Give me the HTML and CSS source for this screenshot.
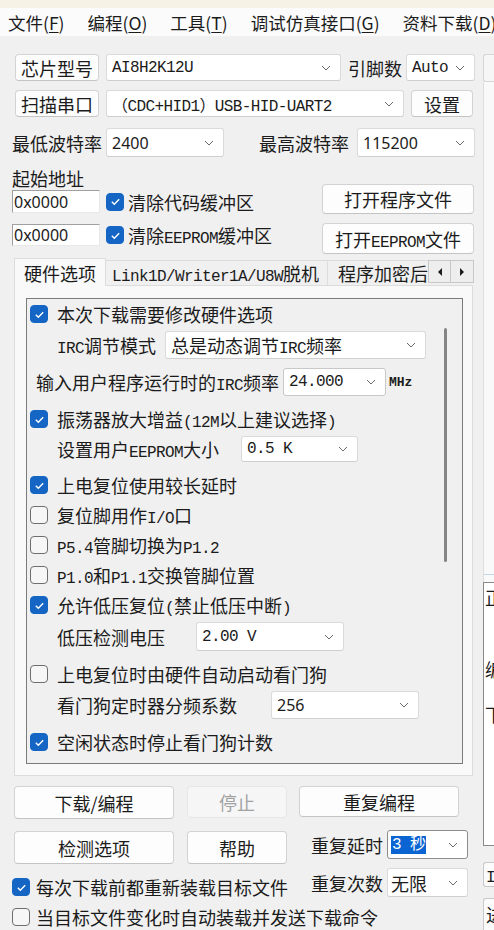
FILE: index.html
```html
<!DOCTYPE html>
<html lang="zh-CN">
<head>
    <meta charset="UTF-8">
    <meta name="viewport" content="width=device-width, initial-scale=1.0">
    <title>ISP 下载</title>
    <link rel="stylesheet" href="styles.css">
</head>
<body>
    <div class="strip"></div>

    <!-- Menu -->
    <div class="menubar">
        <span>文件(<u>F</u>)</span>
        <span>编程(<u>O</u>)</span>
        <span>工具(<u>T</u>)</span>
        <span>调试仿真接口(<u>G</u>)</span>
        <span>资料下载(<u>D</u>)</span>
    </div>

    <div class="window">
        <div class="left">
            <!-- Chip -->
            <div class="row row-chip">
                <div class="btn btn-side">芯片型号</div>
                <div class="combo combo-chip"><span class="m">AI8H2K12U</span><svg class="chev" viewBox="0 0 10 6"><path d="M1 1l4 4 4-4"/></svg></div>
                <span class="lbl lbl-pins">引脚数</span>
                <div class="combo combo-pins"><span class="m">Auto</span><svg class="chev" viewBox="0 0 10 6"><path d="M1 1l4 4 4-4"/></svg></div>
            </div>

            <!-- Port -->
            <div class="row row-port">
                <div class="btn btn-side">扫描串口</div>
                <div class="combo combo-port"><span class="m">（CDC+HID1）USB-HID-UART2</span><svg class="chev" viewBox="0 0 10 6"><path d="M1 1l4 4 4-4"/></svg></div>
                <div class="btn btn-set">设置</div>
            </div>

            <!-- Baud -->
            <div class="row row-baud">
                <span class="lbl lbl-min">最低波特率</span>
                <div class="combo combo-baud"><span class="n">2400</span><svg class="chev" viewBox="0 0 10 6"><path d="M1 1l4 4 4-4"/></svg></div>
                <span class="lbl lbl-max">最高波特率</span>
                <div class="combo combo-baud"><span class="n">115200</span><svg class="chev" viewBox="0 0 10 6"><path d="M1 1l4 4 4-4"/></svg></div>
            </div>

            <!-- Start address / files -->
            <div class="addr-block">
                <div class="addr-left">
                    <div class="addr-title">起始地址</div>
                    <div class="addr-row">
                        <div class="field"><span class="n">0x0000</span></div>
                        <span class="cb on"><svg viewBox="0 0 12 12"><path d="M2.6 6.2l2.3 2.3 4.5-4.6"/></svg></span>
                        <span class="cb-text">清除代码缓冲区</span>
                    </div>
                    <div class="addr-row addr-row2">
                        <div class="field"><span class="n">0x0000</span></div>
                        <span class="cb on"><svg viewBox="0 0 12 12"><path d="M2.6 6.2l2.3 2.3 4.5-4.6"/></svg></span>
                        <span class="cb-text">清除<span class="m">EEPROM</span>缓冲区</span>
                    </div>
                </div>
                <div class="addr-right">
                    <div class="btn btn-file">打开程序文件</div>
                    <div class="btn btn-file btn-file2"><span>打开<span class="m">EEPROM</span>文件</span></div>
                </div>
            </div>

            <!-- Tabs -->
            <div class="tabs">
                <div class="tab active">硬件选项</div>
                <div class="tab tab-link"><span><span class="m">Link1D/Writer1A/U8W</span>脱机</span></div>
                <div class="tab tab-enc">程序加密后</div>
                <div class="tab-arrow"><svg viewBox="0 0 6 8"><path d="M5 0v8L1 4z"/></svg></div>
                <div class="tab-arrow"><svg viewBox="0 0 6 8"><path d="M1 0v8l4-4z"/></svg></div>
            </div>

            <div class="tab-panel">
                <div class="group">
                    <div class="opt"><span class="cb on"><svg viewBox="0 0 12 12"><path d="M2.6 6.2l2.3 2.3 4.5-4.6"/></svg></span><span>本次下载需要修改硬件选项</span></div>
                    <div class="sub sub-irc">
                        <span class="sub-lbl"><span class="m">IRC</span>调节模式</span>
                        <div class="combo combo-irc"><span>总是动态调节<span class="m">IRC</span>频率</span><svg class="chev" viewBox="0 0 10 6"><path d="M1 1l4 4 4-4"/></svg></div>
                    </div>
                    <div class="sub sub-freq">
                        <span class="sub-lbl">输入用户程序运行时的<span class="m">IRC</span>频率</span>
                        <div class="combo combo-freq"><span class="m">24.000</span><svg class="chev" viewBox="0 0 10 6"><path d="M1 1l4 4 4-4"/></svg></div>
                        <span class="mhz">MHz</span>
                    </div>
                    <div class="opt"><span class="cb on"><svg viewBox="0 0 12 12"><path d="M2.6 6.2l2.3 2.3 4.5-4.6"/></svg></span><span>振荡器放大增益<span class="m">(12M</span>以上建议选择<span class="m">)</span></span></div>
                    <div class="sub sub-eep">
                        <span class="sub-lbl">设置用户<span class="m">EEPROM</span>大小</span>
                        <div class="combo combo-eep"><span class="m">0.5 K</span><svg class="chev" viewBox="0 0 10 6"><path d="M1 1l4 4 4-4"/></svg></div>
                    </div>
                    <div class="opt"><span class="cb on"><svg viewBox="0 0 12 12"><path d="M2.6 6.2l2.3 2.3 4.5-4.6"/></svg></span><span>上电复位使用较长延时</span></div>
                    <div class="opt"><span class="cb"></span><span>复位脚用作<span class="m">I/O</span>口</span></div>
                    <div class="opt"><span class="cb"></span><span><span class="m">P5.4</span>管脚切换为<span class="m">P1.2</span></span></div>
                    <div class="opt"><span class="cb"></span><span><span class="m">P1.0</span>和<span class="m">P1.1</span>交换管脚位置</span></div>
                    <div class="opt"><span class="cb on"><svg viewBox="0 0 12 12"><path d="M2.6 6.2l2.3 2.3 4.5-4.6"/></svg></span><span>允许低压复位<span class="m">(</span>禁止低压中断<span class="m">)</span></span></div>
                    <div class="sub sub-lvd">
                        <span class="sub-lbl">低压检测电压</span>
                        <div class="combo combo-lvd"><span class="m">2.00 V</span><svg class="chev" viewBox="0 0 10 6"><path d="M1 1l4 4 4-4"/></svg></div>
                    </div>
                    <div class="opt"><span class="cb"></span><span>上电复位时由硬件自动启动看门狗</span></div>
                    <div class="sub sub-wdt">
                        <span class="sub-lbl">看门狗定时器分频系数</span>
                        <div class="combo combo-wdt"><span class="n">256</span><svg class="chev" viewBox="0 0 10 6"><path d="M1 1l4 4 4-4"/></svg></div>
                    </div>
                    <div class="opt"><span class="cb on"><svg viewBox="0 0 12 12"><path d="M2.6 6.2l2.3 2.3 4.5-4.6"/></svg></span><span>空闲状态时停止看门狗计数</span></div>

                    <div class="scroll-thumb"></div>
                </div>
            </div>

            <!-- Actions -->
            <div class="row row-act">
                <div class="btn btn-wide btn-first">下载/编程</div>
                <div class="btn btn-mid disabled">停止</div>
                <div class="btn btn-wide btn-repeat">重复编程</div>
            </div>

            <div class="bottom">
                <div class="bottom-left">
                    <div class="row row-act2">
                        <div class="btn btn-wide btn-first">检测选项</div>
                        <div class="btn btn-mid">帮助</div>
                    </div>
                    <div class="line"><span class="cb on"><svg viewBox="0 0 12 12"><path d="M2.6 6.2l2.3 2.3 4.5-4.6"/></svg></span><span>每次下载前都重新装载目标文件</span></div>
                    <div class="line"><span class="cb"></span><span>当目标文件变化时自动装载并发送下载命令</span></div>
                </div>
                <div class="bottom-right">
                    <div class="row rep">
                        <span class="lbl lbl-rep">重复延时</span>
                        <div class="combo combo-rep focused"><span class="sel m">3 秒</span><svg class="chev" viewBox="0 0 10 6"><path d="M1 1l4 4 4-4"/></svg></div>
                    </div>
                    <div class="row rep rep2">
                        <span class="lbl lbl-rep">重复次数</span>
                        <div class="combo combo-rep"><span>无限</span><svg class="chev" viewBox="0 0 10 6"><path d="M1 1l4 4 4-4"/></svg></div>
                    </div>
                </div>
            </div>
        </div>

        <!-- Right side panel (cut off at the window edge) -->
        <div class="right">
            <div class="r-top"></div>
            <div class="r-panel">
                <div class="r-line"></div>
                <div class="r-text">
                    <p class="r-p1">正</p>
                    <p class="r-p2">编</p>
                    <p class="r-p3">下</p>
                </div>
            </div>
            <div class="r-box r-box1"><span class="m">I</span></div>
            <div class="r-box r-box2">进</div>
        </div>
    </div>
</body>
</html>
```
FILE: styles.css
```css
/* Base */
body {
    margin: 0;
    width: 494px;
    height: 930px;
    overflow: hidden;
    background-color: #f0f0f0;
    font-family: "Noto Sans CJK SC", sans-serif;
    font-size: 18px;
    color: #1b1b1b;
}

.m {
    font-family: "Liberation Mono", "Noto Sans CJK SC", monospace;
    font-size: 16px;
    letter-spacing: -0.6px;
}

.n {
    font-family: "Noto Sans", sans-serif;
    font-size: 16px;
}

/* Top strip and menu */
.strip {
    height: 8px;
    background-color: #f6f2e6;
}

.menubar {
    height: 28px;
    background-color: #fbfbfb;
    display: flex;
    align-items: center;
    gap: 23px;
    padding-left: 8px;
    font-size: 17.5px;
    white-space: nowrap;
    overflow: hidden;
}

.menubar span {
    flex-shrink: 0;
}

.menubar u {
    text-underline-offset: 2px;
}

/* Layout */
.window {
    display: flex;
}

.left {
    width: 483px;
    flex-shrink: 0;
    box-sizing: border-box;
    padding-left: 12px;
}

.right {
    flex: 1;
    overflow: hidden;
}

.row {
    display: flex;
    align-items: center;
}

/* Buttons */
.btn {
    box-sizing: border-box;
    display: flex;
    align-items: center;
    justify-content: center;
    background-color: #fdfdfd;
    border: 1px solid #d3d3d3;
    border-bottom-color: #c4c4c4;
    border-radius: 4px;
    white-space: nowrap;
}

.btn.disabled {
    background-color: #f6f6f6;
    border-color: #e6e6e6;
    color: #a2a2a2;
}

/* Combo boxes */
.combo {
    box-sizing: border-box;
    display: flex;
    align-items: center;
    background-color: #ffffff;
    border: 1px solid #dadada;
    border-bottom-color: #cfcfcf;
    border-radius: 3px;
    padding: 0 9px 0 5px;
    white-space: nowrap;
}

.chev {
    width: 10px;
    height: 6px;
    margin-left: auto;
    flex-shrink: 0;
    fill: none;
    stroke: #6a6a6a;
    stroke-width: 1;
}

.lbl {
    white-space: nowrap;
}

/* Row: chip */
.row-chip {
    margin-top: 18px;
    height: 27px;
}

.btn-side {
    margin-left: 3px;
    width: 84px;
    height: 27px;
}

.combo-chip {
    margin-left: 7px;
    width: 235px;
    height: 27px;
}

.lbl-pins {
    margin-left: 7px;
    width: 54px;
}

.combo-pins {
    margin-left: 4px;
    width: 69px;
    height: 27px;
}

/* Row: port */
.row-port {
    margin-top: 9px;
    height: 27px;
}

.combo-port {
    margin-left: 7px;
    width: 298px;
    height: 27px;
}

.btn-set {
    margin-left: 7px;
    width: 62px;
    height: 27px;
}

/* Row: baud */
.row-baud {
    margin-top: 11px;
    height: 29px;
}

.lbl-min {
    width: 94px;
}

.lbl-max {
    margin-left: 35px;
    width: 98px;
}

.combo-baud {
    width: 118px;
    height: 29px;
}

/* Start address */
.addr-block {
    display: flex;
    margin-top: 9px;
}

.addr-left {
    flex: 1;
}

.addr-title {
    height: 24px;
    line-height: 24px;
}

.addr-row {
    display: flex;
    align-items: center;
    height: 23px;
}

.addr-row2 {
    margin-top: 11px;
    height: 22px;
}

.field {
    box-sizing: border-box;
    width: 88px;
    height: 100%;
    display: flex;
    align-items: center;
    background-color: #ffffff;
    border-top: 1px solid #a0a0a0;
    border-left: 1px solid #a0a0a0;
    border-right: 1px solid #e8e8e8;
    border-bottom: 1px solid #e8e8e8;
    padding-left: 1px;
}

.addr-row .cb {
    margin-left: 6px;
}

.cb-text {
    margin-left: 4px;
    white-space: nowrap;
}

.addr-right {
    width: 152px;
    margin-right: 9px;
}

.btn-file {
    margin-top: 18px;
    height: 30px;
}

.btn-file2 {
    margin-top: 9px;
    height: 31px;
}

/* Checkboxes */
.cb {
    box-sizing: border-box;
    width: 18px;
    height: 18px;
    flex-shrink: 0;
    border: 1px solid #6e6e6e;
    border-radius: 4px;
    background-color: #f6f6f6;
    display: flex;
    align-items: center;
    justify-content: center;
}

.cb.on {
    background-color: #1465c4;
    border-color: #1465c4;
}

.cb svg {
    width: 13px;
    height: 13px;
    fill: none;
    stroke: #ffffff;
    stroke-width: 1.3;
}

/* Tabs */
.tabs {
    display: flex;
    align-items: flex-end;
    height: 27px;
    margin-top: 4px;
    margin-left: 2px;
    white-space: nowrap;
}

.tab {
    box-sizing: border-box;
    height: 25px;
    display: flex;
    align-items: center;
    border: 1px solid #dcdcdc;
    border-bottom: none;
    background-color: #f0f0f0;
    overflow: hidden;
}

.tab.active {
    position: relative;
    z-index: 1;
    width: 92px;
    height: 28px;
    margin-bottom: -1px;
    justify-content: center;
    background-color: #f9f9f9;
}

.tab-link {
    width: 222px;
    padding-left: 6px;
    border-left: none;
}

.tab-enc {
    width: 100px;
    padding-left: 10px;
    border-left: none;
    border-right: none;
}

.tab-arrow {
    box-sizing: border-box;
    width: 23px;
    height: 23px;
    margin-bottom: 2px;
    display: flex;
    align-items: center;
    justify-content: center;
    background-color: #eeeeee;
    border: 1px solid #c8c8c8;
}

.tab-arrow + .tab-arrow {
    border-left: none;
}

.tab-arrow svg {
    width: 6px;
    height: 8px;
    fill: #1b1b1b;
}

.tab-panel {
    box-sizing: border-box;
    width: 459px;
    height: 491px;
    margin-left: 2px;
    border: 1px solid #dcdcdc;
    background-color: #f9f9f9;
    padding: 12px 0 0 11px;
}

.group {
    position: relative;
    box-sizing: border-box;
    width: 437px;
    height: 466px;
    border: 1px solid #7b7b7b;
    background-color: #f0f0f0;
    padding-left: 3px;
}

.opt {
    display: flex;
    align-items: center;
    gap: 9px;
    height: 30px;
    white-space: nowrap;
}

.sub {
    display: flex;
    align-items: center;
    height: 28px;
    padding-left: 27px;
    white-space: nowrap;
}

.opt + .sub {
    margin-top: 2px;
}

.sub + .sub {
    margin-top: 9px;
}

.sub + .opt {
    margin-top: 8px;
}

.sub-irc .sub-lbl {
    width: 108px;
}

.combo-irc {
    width: 261px;
    height: 28px;
}

.sub-freq {
    padding-left: 6px;
}

.sub-freq .sub-lbl {
    width: 247px;
}

.combo-freq {
    width: 103px;
    height: 28px;
    border-color: #c8c8c8;
}

.mhz {
    margin-left: 3px;
    font-family: "Liberation Mono", monospace;
    font-size: 13px;
    font-weight: bold;
}

.sub-eep {
    height: 26px;
}

.sub-eep .sub-lbl {
    width: 184px;
}

.combo-eep {
    width: 117px;
    height: 26px;
}

.sub-lvd {
    height: 29px;
}

.sub-lvd .sub-lbl {
    width: 139px;
}

.combo-lvd {
    width: 148px;
    height: 29px;
}

.sub-wdt .sub-lbl {
    width: 214px;
}

.combo-wdt {
    width: 148px;
    height: 28px;
}

.scroll-thumb {
    position: absolute;
    left: 417px;
    top: 29px;
    width: 3px;
    height: 234px;
    border-radius: 2px;
    background-color: #858585;
}

/* Action buttons */
.row-act {
    margin-top: 10px;
    align-items: flex-start;
}

.btn-wide {
    width: 160px;
    height: 33px;
}

.btn-first {
    margin-left: 2px;
}

.btn-mid {
    margin-left: 13px;
    width: 100px;
    height: 33px;
}

.btn-mid.disabled {
    height: 32px;
}

.btn-repeat {
    margin-left: 12px;
    height: 31px;
}

.bottom {
    display: flex;
    margin-top: 11px;
}

.bottom-left {
    width: 299px;
}

.row-act2 {
    margin-top: 1px;
}

.line {
    display: flex;
    align-items: center;
    gap: 6px;
    height: 30px;
    white-space: nowrap;
}

.row-act2 + .line {
    margin-top: 8px;
}

.rep {
    height: 29px;
}

.rep2 {
    margin-top: 9px;
}

.lbl-rep {
    width: 76px;
}

.combo-rep {
    width: 81px;
    height: 29px;
    padding-left: 3px;
}

.combo-rep.focused {
    border-color: #8c8c8c;
}

.sel {
    background-color: #0a64d2;
    color: #ffffff;
    padding: 0 1px;
    line-height: 18px;
}

/* Right side panel */
.r-top {
    box-sizing: border-box;
    height: 28px;
    margin-top: 18px;
    border: 1px solid #d6d6d6;
    border-right: none;
    border-radius: 3px 0 0 3px;
    background-color: #f6f6f6;
}

.r-panel {
    box-sizing: border-box;
    height: 764px;
    border-left: 1px solid #dedede;
    background-color: #f9f9f9;
    padding-top: 492px;
}

.r-line {
    height: 1px;
    background-color: #c5d6ea;
}

.r-text {
    box-sizing: border-box;
    height: 264px;
    margin-top: 7px;
    margin-left: -1px;
    border: 1px solid #8a8a8a;
    border-right: none;
    background-color: #ffffff;
    padding-left: 1px;
    white-space: nowrap;
}

.r-text p {
    margin: 0;
    line-height: 20px;
}

.r-p1 {
    padding-top: 4px;
}

.r-p2 {
    margin-top: 52px !important;
}

.r-p3 {
    margin-top: 25px !important;
}

.r-box {
    box-sizing: border-box;
    border: 1px solid #c9c9c9;
    border-right: none;
    border-radius: 3px 0 0 3px;
    background-color: #fbfbfb;
    padding-left: 2px;
    white-space: nowrap;
}

.r-box1 {
    height: 25px;
    margin-top: 16px;
    line-height: 22px;
}

.r-box2 {
    height: 40px;
    margin-top: 11px;
    line-height: 30px;
}
```
